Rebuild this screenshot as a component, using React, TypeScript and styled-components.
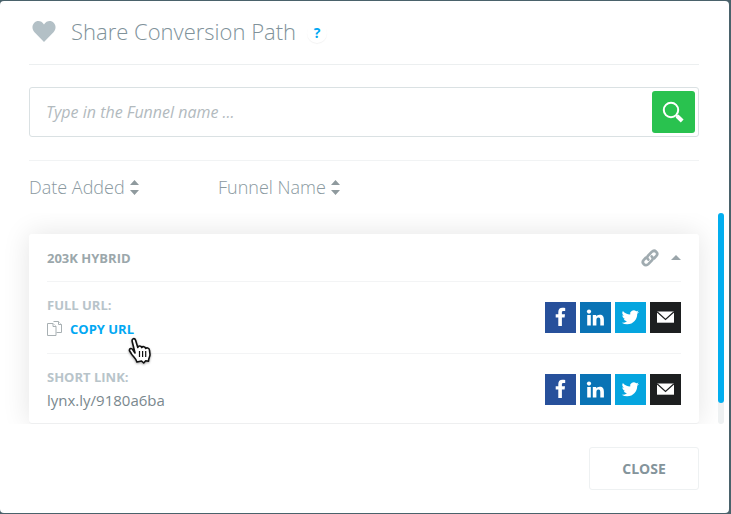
import React from "react";
import styled, { createGlobalStyle } from "styled-components";

const GlobalStyle = createGlobalStyle`
  *, *::before, *::after { box-sizing: border-box; }
  body {
    margin: 0;
    background: #4a626b;
    font-family: "Open Sans", "Noto Sans", sans-serif;
    color: #95a1a6;
  }
  button, input { font: inherit; color: inherit; }
  button { cursor: pointer; }
`;

const Backdrop = styled.div`
  padding: 1px 2px 1px 0;
`;

const Dialog = styled.main`
  padding: 0 30px 23px 29px;
  background: #fff;
  border-radius: 4px;
`;

const Header = styled.header`
  display: flex;
  align-items: center;
  height: 64px;
  padding-bottom: 3px;
  border-bottom: 1px solid #eceff0;
`;

const Title = styled.h1`
  margin: 0 11px 0 15px;
  font-size: 22px;
  line-height: 30px;
  font-weight: 300;
  color: #80929a;
`;

const HeartIcon = styled.svg`
  width: 24px;
  height: 21px;
  margin-left: 3px;
  fill: #b3c0c6;
`;

const HelpButton = styled.button`
  width: 20px;
  height: 20px;
  margin-top: 4px;
  padding: 0;
  border: 0;
  border-radius: 50%;
  background: #fff;
  box-shadow: 0 1px 1px rgba(0, 0, 0, 0.05);
  color: #02a8f3;
  font-size: 14px;
  line-height: 20px;
  font-weight: 700;
`;

const SearchForm = styled.form`
  display: flex;
  height: 50px;
  margin: 22px 0 23px;
  padding: 3px;
  border: 1px solid #dae1e3;
  border-radius: 3px;
`;

const SearchInput = styled.input`
  flex: 1;
  min-width: 0;
  padding: 0 13px;
  border: 0;
  outline: 0;
  background: transparent;
  font-size: 16px;
  font-style: italic;
  &::placeholder { color: #b2babe; opacity: 1; }
`;

const SearchButton = styled.button`
  display: grid;
  place-items: center;
  width: 43px;
  padding: 0 1px 1px 0;
  border: 0;
  border-radius: 3px;
  background: #29c24f;
`;

const SortBar = styled.div`
  display: grid;
  grid-template-columns: 189px 1fr;
  align-items: center;
  height: 53px;
  border-top: 1px solid #f1f3f4;
`;

const SortButton = styled.button`
  display: flex;
  align-items: center;
  gap: 5px;
  justify-self: start;
  padding: 0;
  border: 0;
  background: none;
  font-size: 18px;
  line-height: 24px;
  font-weight: 300;
  color: #8a999f;
`;

const ListArea = styled.section`
  display: flex;
  margin: 0 -25px 0 -29px;
  overflow: hidden;
`;

const Card = styled.article`
  flex: 1;
  margin: 21px 19px 0 29px;
  padding: 0 18px;
  border-radius: 3px;
  background: #fff;
  box-shadow: 0 0 28px rgba(0, 0, 0, 0.11), inset 0 -1px #eeeff0;
`;

const ScrollTrack = styled.div`
  width: 6px;
  border-radius: 3px;
  background: #eef1f2;
`;

const ScrollThumb = styled.div`
  height: 90%;
  border-radius: 3px;
  background: #02aeef;
`;

const CardHeader = styled.div`
  display: flex;
  align-items: center;
  height: 48px;
  border-bottom: 1px solid #f3f4f5;
`;

const CardTitle = styled.h2`
  flex: 1;
  margin: 0;
  font-size: 13px;
  line-height: 20px;
  font-weight: 700;
  color: #9ba7ab;
`;

const IconButton = styled.button`
  display: flex;
  margin-left: 12px;
  padding: 0;
  border: 0;
  background: none;
`;

const LinkRow = styled.div`
  display: flex;
  justify-content: space-between;
  align-items: center;
  height: 71px;
  & + & { border-top: 1px solid #f3f4f5; }
`;

const LinkText = styled.div`
  padding-bottom: 2px;
`;

const LinkLabel = styled.div`
  font-size: 13px;
  line-height: 24px;
  font-weight: 700;
  color: #b8c4ca;
`;

const CopyButton = styled.button`
  position: relative;
  display: flex;
  align-items: center;
  gap: 8px;
  padding: 0;
  border: 0;
  background: none;
  color: #02a8f3;
  font-size: 13px;
  line-height: 24px;
  font-weight: 700;
`;

const Pointer = styled.svg`
  position: absolute;
  top: 19px;
  right: -19px;
  width: 26px;
  height: 30px;
  z-index: 1;
  pointer-events: none;
  filter: drop-shadow(0 1px 1px rgba(0, 0, 0, 0.35));
`;

const ShortLink = styled.a`
  display: block;
  font-size: 15px;
  line-height: 22px;
  color: #7a888e;
  text-decoration: none;
`;

const ShareList = styled.div`
  display: flex;
  gap: 4px;
`;

const ShareButton = styled.button<{ $color: string }>`
  width: 31px;
  height: 31px;
  padding: 0;
  border: 0;
  background: ${(p) => p.$color};
  svg { display: block; width: 31px; height: 31px; fill: #fff; }
`;

const Footer = styled.footer`
  display: flex;
  justify-content: flex-end;
  margin-top: 23px;
`;

const CloseButton = styled.button`
  width: 110px;
  height: 43px;
  padding: 0;
  border: 1px solid #eef1f2;
  border-radius: 3px;
  background: #fff;
  color: #84949b;
  font-size: 14px;
  font-weight: 700;
`;

const SortIcon = () => (
  <svg width="9" height="16" viewBox="0 0 9 16" fill="#8f9a9e" aria-hidden="true">
    <path d="M4.500 1 9 6H0zM0 11h9l-4.500 5z" />
  </svg>
);

const shareTargets = [
  {
    name: "Facebook",
    color: "#27509b",
    icon: <path d="M13.300 24v-8.400h-2.600v-3.400h2.600V9.900c0-2.700 1.500-4.200 4-4.200 1.200 0 2.200.1 2.900.2v3h-1.700c-1.300 0-1.600.7-1.600 1.600v1.700h3.100l-.4 3.400h-2.700V24z" />,
  },
  {
    name: "LinkedIn",
    color: "#0a73b5",
    icon: (
      <>
        <circle cx="9" cy="9.600" r="2.100" />
        <path d="M7.200 13h3.600v10.500H7.200zM12.800 13h3.400v1.500c.6-1 1.800-1.800 3.500-1.800 3.300 0 4.200 2 4.200 5v5.800h-3.600v-5.200c0-1.500-.2-2.800-1.900-2.800-1.500 0-2 1.200-2 2.700v5.300h-3.600z" />
      </>
    ),
  },
  {
    name: "Twitter",
    color: "#05a5df",
    icon: <path transform="translate(6.700 6.600) scale(.72)" d="M23.950 4.570a10 10 0 0 1-2.820.77 4.960 4.960 0 0 0 2.160-2.720c-.95.550-2 .950-3.120 1.180a4.920 4.920 0 0 0-8.380 4.480C7.690 8.100 4.070 6.130 1.640 3.160a4.900 4.900 0 0 0 1.520 6.570 4.900 4.900 0 0 1-2.230-.61v.06a4.920 4.920 0 0 0 3.950 4.830 5 5 0 0 1-2.210.08 4.940 4.940 0 0 0 4.600 3.420A9.870 9.870 0 0 1 0 19.540a14 14 0 0 0 7.550 2.210c9.050 0 14-7.500 14-13.980l-.02-.64a9.940 9.940 0 0 0 2.420-2.560z" />,
  },
  {
    name: "Email",
    color: "#1d1f20",
    icon: (
      <>
        <path d="M7 9.500h17v11.200H7z" />
        <path d="m7 9.800 8.500 7.700L24 9.800" fill="none" stroke="#1d1f20" strokeWidth="1.200" />
      </>
    ),
  },
];

const ShareButtons = ({ label }: { label: string }) => (
  <ShareList>
    {shareTargets.map((target) => (
      <ShareButton key={target.name} type="button" $color={target.color} aria-label={`Share ${label} on ${target.name}`}>
        <svg viewBox="0 0 31 31" aria-hidden="true">{target.icon}</svg>
      </ShareButton>
    ))}
  </ShareList>
);

export default function App() {
  return (
    <>
      <GlobalStyle />
      <Backdrop>
        <Dialog>
          <Header>
            <HeartIcon viewBox="0 0 25 21" preserveAspectRatio="none" aria-hidden="true">
              <path d="M12.500 21 2.600 11.200C-.2 8.300-.1 4.200 2.200 1.900 5-.8 9.900-.6 12.500 3.600 15.100-.6 20-.8 22.800 1.900c2.300 2.300 2.400 6.400-.4 9.300z" />
            </HeartIcon>
            <Title>Share Conversion Path</Title>
            <HelpButton type="button" aria-label="Help">?</HelpButton>
          </Header>
          <SearchForm onSubmit={(e) => e.preventDefault()}>
            <SearchInput type="text" aria-label="Funnel name" placeholder="Type in the Funnel name ..." />
            <SearchButton type="submit" aria-label="Search">
              <svg width="22" height="22" viewBox="0 0 22 22" fill="none" stroke="#fff" aria-hidden="true">
                <circle cx="9" cy="9" r="7.200" strokeWidth="2" />
                <path d="m14 14 1.500 1.500" strokeWidth="2" />
                <path d="m15 15 5.200 5" strokeWidth="4" />
              </svg>
            </SearchButton>
          </SearchForm>
          <SortBar>
            <SortButton type="button">Date Added<SortIcon /></SortButton>
            <SortButton type="button">Funnel Name<SortIcon /></SortButton>
          </SortBar>
          <ListArea>
            <Card>
              <CardHeader>
                <CardTitle>203K HYBRID</CardTitle>
                <IconButton type="button" aria-label="Links">
                  <svg width="18" height="18" viewBox="0 0 18 18" fill="none" stroke="#a0abb0" strokeWidth="2.700" strokeLinecap="round" aria-hidden="true">
                    <path d="M7.300 10.600c-1.400-1.200-1.300-2.700-.2-3.900l3.600-3.800c1.300-1.300 3.200-1.400 4.400-.2 1.300 1.200 1.300 3.100.1 4.400l-2 2.100" />
                    <path d="M10.700 7.400c1.400 1.200 1.300 2.700.2 3.900l-3.600 3.800c-1.300 1.300-3.200 1.400-4.400.2-1.300-1.200-1.300-3.100-.1-4.400l2-2.100" />
                  </svg>
                </IconButton>
                <IconButton type="button" aria-label="Collapse">
                  <svg width="10" height="5" viewBox="0 0 10 5" fill="#9aa5aa" aria-hidden="true">
                    <path d="M0 5 5 0l5 5z" />
                  </svg>
                </IconButton>
              </CardHeader>
              <LinkRow>
                <LinkText>
                  <LinkLabel>FULL URL:</LinkLabel>
                  <CopyButton type="button">
                    <svg width="15" height="15" viewBox="0 0 15 15" fill="#fff" stroke="#a8b0b3" aria-hidden="true">
                      <path d="M6.500.5h5l3 3v8h-5" />
                      <path d="M11.500.5v3h3" />
                      <path d="M.5 2.500h5.500l3 3v9H.5z" />
                      <path d="M6 2.500v3h3" />
                    </svg>
                    COPY URL
                    <Pointer viewBox="0 0 26 30" aria-hidden="true">
                      <path d="M8 17 5.200 5.500C4.500 2.400 7.700 1.500 8.600 4.300l2.200 7.200c.6-2.100 3.200-2 3.900.1 1-1.700 3.500-1.100 4 .9 1.300-1.200 3.600-.4 3.800 1.800l.5 4.200c.2 2-1.600 3.700-1.500 6.700l-2.800-.5-2 2.300-2.200-2-4.600 1c-.8-3.700-3.700-5.200-5.500-8.200L2.500 14.800C2 12.200 4.600 11.800 6 14z" fill="#fff" stroke="#111" strokeWidth="1.600" strokeLinejoin="round" />
                      <path d="M12.500 15v6M15.600 15v6M18.700 15v6" stroke="#111" strokeWidth="1.200" />
                    </Pointer>
                  </CopyButton>
                </LinkText>
                <ShareButtons label="full URL" />
              </LinkRow>
              <LinkRow>
                <LinkText>
                  <LinkLabel>SHORT LINK:</LinkLabel>
                  <ShortLink href="#short-link">lynx.ly/9180a6ba</ShortLink>
                </LinkText>
                <ShareButtons label="short link" />
              </LinkRow>
            </Card>
            <ScrollTrack><ScrollThumb /></ScrollTrack>
          </ListArea>
          <Footer><CloseButton type="button">CLOSE</CloseButton></Footer>
        </Dialog>
      </Backdrop>
    </>
  );
}
